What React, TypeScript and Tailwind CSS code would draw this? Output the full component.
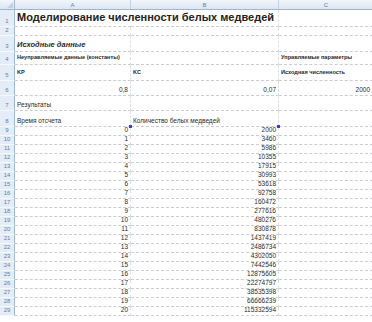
import React from "react";

const values: [number, number][] = [
  [0, 2000], [1, 3460], [2, 5986], [3, 10355], [4, 17915], [5, 30993], [6, 53618],
  [7, 92758], [8, 160472], [9, 277616], [10, 480276], [11, 830878], [12, 1437419],
  [13, 2486734], [14, 4302050], [15, 7442546], [16, 12875605], [17, 22274797],
  [18, 38535398], [19, 66666239], [20, 115332594],
];

function RowHead({ n, h }: { n: number | string; h: number }) {
  return (
    <div
      className="w-[15px] shrink-0 flex items-end justify-center bg-[#e4ecf7] border-r border-r-[#9eb6ce] border-b border-b-[#f4f7fb] text-[6px] leading-none text-[#6a80a0] pb-[2px]"
      style={{ height: h }}
    >
      {n}
    </div>
  );
}

type CellProps = {
  w: string;
  children?: React.ReactNode;
  right?: boolean;
  noR?: boolean;
  extra?: string;
};

function Cell({ w, children, right, noR, extra = "" }: CellProps) {
  return (
    <div
      className={`${w} shrink-0 h-full relative flex items-end ${right ? "justify-end" : "justify-start"} px-[2px] pb-[2px] border-b border-dashed border-b-[#c9cdd3] ${noR ? "" : "border-r border-r-[#dde0e4]"} whitespace-nowrap text-[6.5px] leading-none text-[#2a2a2a] ${extra}`}
    >
      {children}
    </div>
  );
}

function Row({ n, h, children }: { n: number; h: number; children: React.ReactNode }) {
  return (
    <div className="flex" style={{ height: h }}>
      <RowHead n={n} h={h} />
      {children}
    </div>
  );
}

export default function App() {
  return (
    <div
      className="w-[372px] h-[322px] overflow-hidden bg-white"
      style={{ fontFamily: '"Liberation Sans", Arial, sans-serif' }}
    >
      <div className="w-[373px]">
        {/* header */}
        <div className="flex h-[10px] bg-gradient-to-b from-[#f3f6fb] to-[#dbe5f2] border-b border-b-[#9eb6ce] text-[6px] leading-none text-[#6a80a0]">
          <div className="w-[15px] shrink-0 relative border-r border-r-[#9eb6ce]">
            <div className="absolute right-[1px] bottom-[1px] w-0 h-0 border-l-[6px] border-l-transparent border-b-[6px] border-b-[#c5cfdb]" />
          </div>
          <div className="w-[116px] shrink-0 flex items-center justify-center border-r border-r-[#c6d3e2]">A</div>
          <div className="w-[148px] shrink-0 flex items-center justify-center border-r border-r-[#c6d3e2]">B</div>
          <div className="w-[94px] shrink-0 flex items-center justify-center">C</div>
        </div>

        <Row n={1} h={17}>
          <Cell w="w-[116px]" noR extra="pb-[3px]">
            <span className="text-[11px] font-bold text-[#222]">Моделирование численности белых медведей</span>
          </Cell>
          <Cell w="w-[148px]" />
          <Cell w="w-[94px]" />
        </Row>
        <Row n={2} h={9}>
          <Cell w="w-[116px]" />
          <Cell w="w-[148px]" />
          <Cell w="w-[94px]" />
        </Row>
        <Row n={3} h={16}>
          <Cell w="w-[116px]" extra="pb-[3px]">
            <span className="text-[7.5px] font-bold italic">Исходные данные</span>
          </Cell>
          <Cell w="w-[148px]" />
          <Cell w="w-[94px]" />
        </Row>
        <Row n={4} h={13}>
          <Cell w="w-[116px]" extra="pb-[3px]">
            <span className="font-bold text-[5.6px]">Неуправляемые данные (константы)</span>
          </Cell>
          <Cell w="w-[148px]" />
          <Cell w="w-[94px]" extra="pb-[3px]">
            <span className="font-bold text-[5.6px]">Управляемые параметры</span>
          </Cell>
        </Row>
        <Row n={5} h={16}>
          <Cell w="w-[116px]" extra="pb-[4px]">
            <span className="font-bold text-[5.6px]">KP</span>
          </Cell>
          <Cell w="w-[148px]" extra="pb-[4px]">
            <span className="font-bold text-[5.6px]">KC</span>
          </Cell>
          <Cell w="w-[94px]" extra="pb-[4px]">
            <span className="font-bold text-[5.6px]">Исходная численность</span>
          </Cell>
        </Row>
        <Row n={6} h={15}>
          <Cell w="w-[116px]" right>0,8</Cell>
          <Cell w="w-[148px]" right>0,07</Cell>
          <Cell w="w-[94px]" right>2000</Cell>
        </Row>
        <Row n={7} h={15}>
          <Cell w="w-[116px]">Результаты</Cell>
          <Cell w="w-[148px]" />
          <Cell w="w-[94px]" />
        </Row>
        <Row n={8} h={16}>
          <Cell w="w-[116px]" extra="border-b-[#a95fc0]">Время отсчета</Cell>
          <Cell w="w-[148px]">Количество белых медведей</Cell>
          <Cell w="w-[94px]" />
        </Row>
        {values.map(([t, v], i) => (
          <Row key={i} n={9 + i} h={9}>
            <Cell w="w-[116px]" right extra="pb-[1px] border-r-[#7d74da]">
              {t}
              {i === 0 && (
                <div className="absolute -top-[2px] -right-[2px] w-[3px] h-[3px] bg-[#3a3fd0]" />
              )}
            </Cell>
            <Cell w="w-[148px]" right extra="pb-[1px] border-r-[#8a86e0]">
              {v}
              {i === 0 && (
                <div className="absolute -top-[2px] -right-[2px] w-[3px] h-[3px] bg-[#3a3fd0]" />
              )}
            </Cell>
            <Cell w="w-[94px]" extra="pb-[1px]" />
          </Row>
        ))}
      </div>
    </div>
  );
}
